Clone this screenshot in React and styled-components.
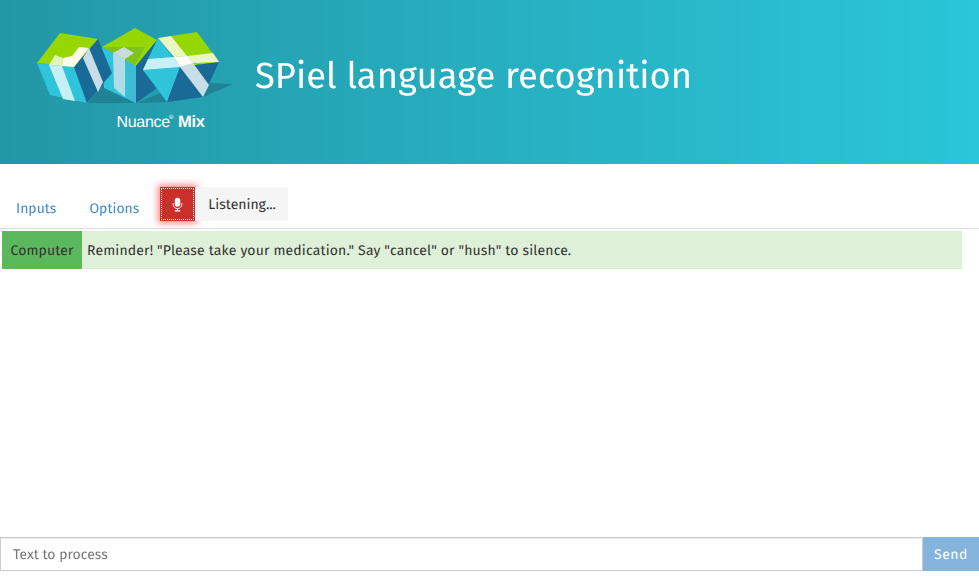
import React from "react";
import styled, { createGlobalStyle } from "styled-components";

const FONT = `"Fira Sans", "Noto Sans", "Open Sans", sans-serif`;

const Logo = () => (
  <LogoSvg viewBox="0 0 255 164">
    {/* shadows */}
    <polygon points="88,103 103,84 136,103" fill="#1f8295" />
    <polygon points="137,103 167,90 167,102" fill="#1f8295" />
    <polygon points="203,97 210,83 233,84" fill="#1f8295" />
    {/* middle cube */}
    <polygon points="102,47 135,28 157,40 136,66" fill="#97d700" />
    <polygon points="103,47 145,47 135,65" fill="#7fc31c" />
    <polygon points="102,47 136,66 136,103 104,88" fill="#2fc4da" />
    <polygon points="127,62 136,66 136,103 128,99" fill="#3dbcd4" />
    <polygon points="136,66 157,40 143,70 157,88 136,103" fill="#1a6a97" />
    <polygon points="113,53 124,47 134,53 125,59" fill="#c9dedb" />
    <polygon points="113,53 125,59 125,97 114,88" fill="#b1dbe6" />
    {/* left cube */}
    <polygon points="37,63 60,33 98,39 74,67" fill="#97d700" />
    <polygon points="37,63 74,67 87,103 50,95" fill="#2fc4da" />
    <polygon points="74,67 98,39 112,73 87,103" fill="#1a6a97" />
    <polygon points="49,65 55,55 63,58 62,66" fill="#e4f2bd" />
    <polygon points="62,66 63,58 72,56 79,47 89,48 74,67" fill="#fdfee8" />
    <polygon points="49,65 62,66 75,101 63,99" fill="#c6f0f6" />
    <polygon points="83,58 89,48 103,82 98,92" fill="#c8dde8" />
    {/* right cube */}
    <polygon points="158,38 143,70 180,67" fill="#2fc4da" />
    <polygon points="143,70 180,67 167,102" fill="#2fc4da" />
    <polygon points="171,36 197,32 219,62 180,67" fill="#97d700" />
    <polygon points="180,67 219,62 203,97 167,102" fill="#1a6a97" />
    <polygon points="158,38 171,36 187,56 174,57" fill="#eaf6c4" />
    <polygon points="180,67 193,63 209,85 203,97" fill="#c8dde8" />
    <polygon points="148,59 174,57 180,67 143,70" fill="#c8f1f6" />
    <polygon points="187,56 213,53 219,62 193,63" fill="#eaf6c4" />
    <polygon points="174,57 187,56 193,63 180,67" fill="#fff" />
    <LogoText x="116.500" y="127" fontSize="16" letterSpacing="-0.3">
      Nuance
    </LogoText>
    <LogoText x="169" y="119" fontSize="6">
      ®
    </LogoText>
    <LogoText x="178" y="127" fontSize="16.500" fontWeight="700" letterSpacing="-0.3">
      Mix
    </LogoText>
  </LogoSvg>
);

const MicIcon = () => (
  <svg width="11" height="15" viewBox="0 0 12 16">
    <rect x="3" y="0.5" width="6" height="10" rx="3" fill="#fff" />
    <path d="M1.2 6.5v1.2a4.8 4.8 0 0 0 9.6 0V6.500" fill="none" stroke="#fff" />
    <path d="M6 12.500v2M3 15h6" fill="none" stroke="#fff" strokeWidth="1.200" />
  </svg>
);

const App = () => {
  return (
    <Page>
      <GlobalStyle />
      <Header>
        <Logo />
        <Title>SPiel language recognition</Title>
      </Header>
      <Tabs>
        <TabLink>Inputs</TabLink>
        <TabLink>Options</TabLink>
        <MicButton>
          <MicIcon />
        </MicButton>
        <Status>Listening...</Status>
      </Tabs>
      <Messages>
        <Message>
          <Speaker>Computer</Speaker>
          <MessageText>
            Reminder! "Please take your medication." Say "cancel" or "hush" to silence.
          </MessageText>
        </Message>
      </Messages>
      <InputRow>
        <TextInput placeholder="Text to process" />
        <SendButton>Send</SendButton>
      </InputRow>
    </Page>
  );
};

export default App;

// STYLES
const GlobalStyle = createGlobalStyle`
  html, body {
    margin: 0;
    padding: 0;
    background: #fff;
  }
  body {
    font-family: ${FONT};
    font-size: 14px;
    color: #333;
    text-rendering: geometricPrecision;
  }
  input, button {
    text-rendering: geometricPrecision;
  }
`;

const Page = styled.div`
  width: 979px;
  height: 579px;
  display: flex;
  flex-direction: column;
  overflow: hidden;
  will-change: opacity;
`;

const Header = styled.header`
  height: 164px;
  flex: none;
  display: flex;
  align-items: center;
  background: linear-gradient(to right, #2397a6, #2ac6d9);
`;

const LogoSvg = styled.svg`
  width: 255px;
  height: 164px;
  flex: none;
`;

const LogoText = styled.text`
  fill: #fff;
  font-family: "Liberation Sans", sans-serif;
`;

const Title = styled.h1`
  margin: 0 0 12px;
  font-size: 36.4px;
  font-weight: 400;
  line-height: 1;
  color: #fff;
`;

const Tabs = styled.nav`
  height: 65px;
  flex: none;
  box-sizing: border-box;
  display: flex;
  align-items: flex-start;
  padding: 23px 0 0 1px;
  border-bottom: 1px solid #ddd;
`;

const TabLink = styled.a`
  padding: 14px 15px 0;
  margin-right: 3px;
  font-size: 14px;
  line-height: 16px;
  color: #428bca;
`;

const MicButton = styled.button`
  width: 35px;
  height: 34px;
  margin-left: 3px;
  box-sizing: border-box;
  padding: 0;
  display: flex;
  align-items: center;
  justify-content: center;
  background: #c9302c;
  border: 0;
  outline: 1px dotted #fff;
  outline-offset: -2px;
  box-shadow: 0 0 7px 2px rgba(255, 0, 0, 0.5);
`;

const Status = styled.div`
  height: 34px;
  padding: 0 12px 0 13px;
  display: flex;
  align-items: center;
  background: #f5f5f5;
  font-size: 14px;
  color: #333;
`;

const Messages = styled.main`
  flex: 1;
  padding: 2px 17px 0 2px;
`;

const Message = styled.div`
  height: 38px;
  display: flex;
  background: #dff0d8;
  line-height: 40px;
  font-size: 14px;
`;

const Speaker = styled.div`
  width: 80px;
  text-align: center;
  background: #5cb85c;
  letter-spacing: 0.1px;
`;

const MessageText = styled.div`
  padding-left: 5px;
  letter-spacing: 0.15px;
`;

const InputRow = styled.form`
  height: 34px;
  margin-bottom: 8px;
  flex: none;
  display: flex;
`;

const TextInput = styled.input`
  flex: 1;
  min-width: 0;
  box-sizing: border-box;
  padding: 0 12px;
  border: 1px solid #ccc;
  box-shadow: inset 0 1px 1px rgba(0, 0, 0, 0.075);
  font-family: ${FONT};
  font-size: 14px;
  &::placeholder {
    color: #777;
    opacity: 1;
  }
`;

const SendButton = styled.button`
  width: 56px;
  padding: 0;
  border: 0;
  background: #84b3dc;
  color: #fff;
  font-family: ${FONT};
  font-size: 14px;
  letter-spacing: 0.5px;
`;
